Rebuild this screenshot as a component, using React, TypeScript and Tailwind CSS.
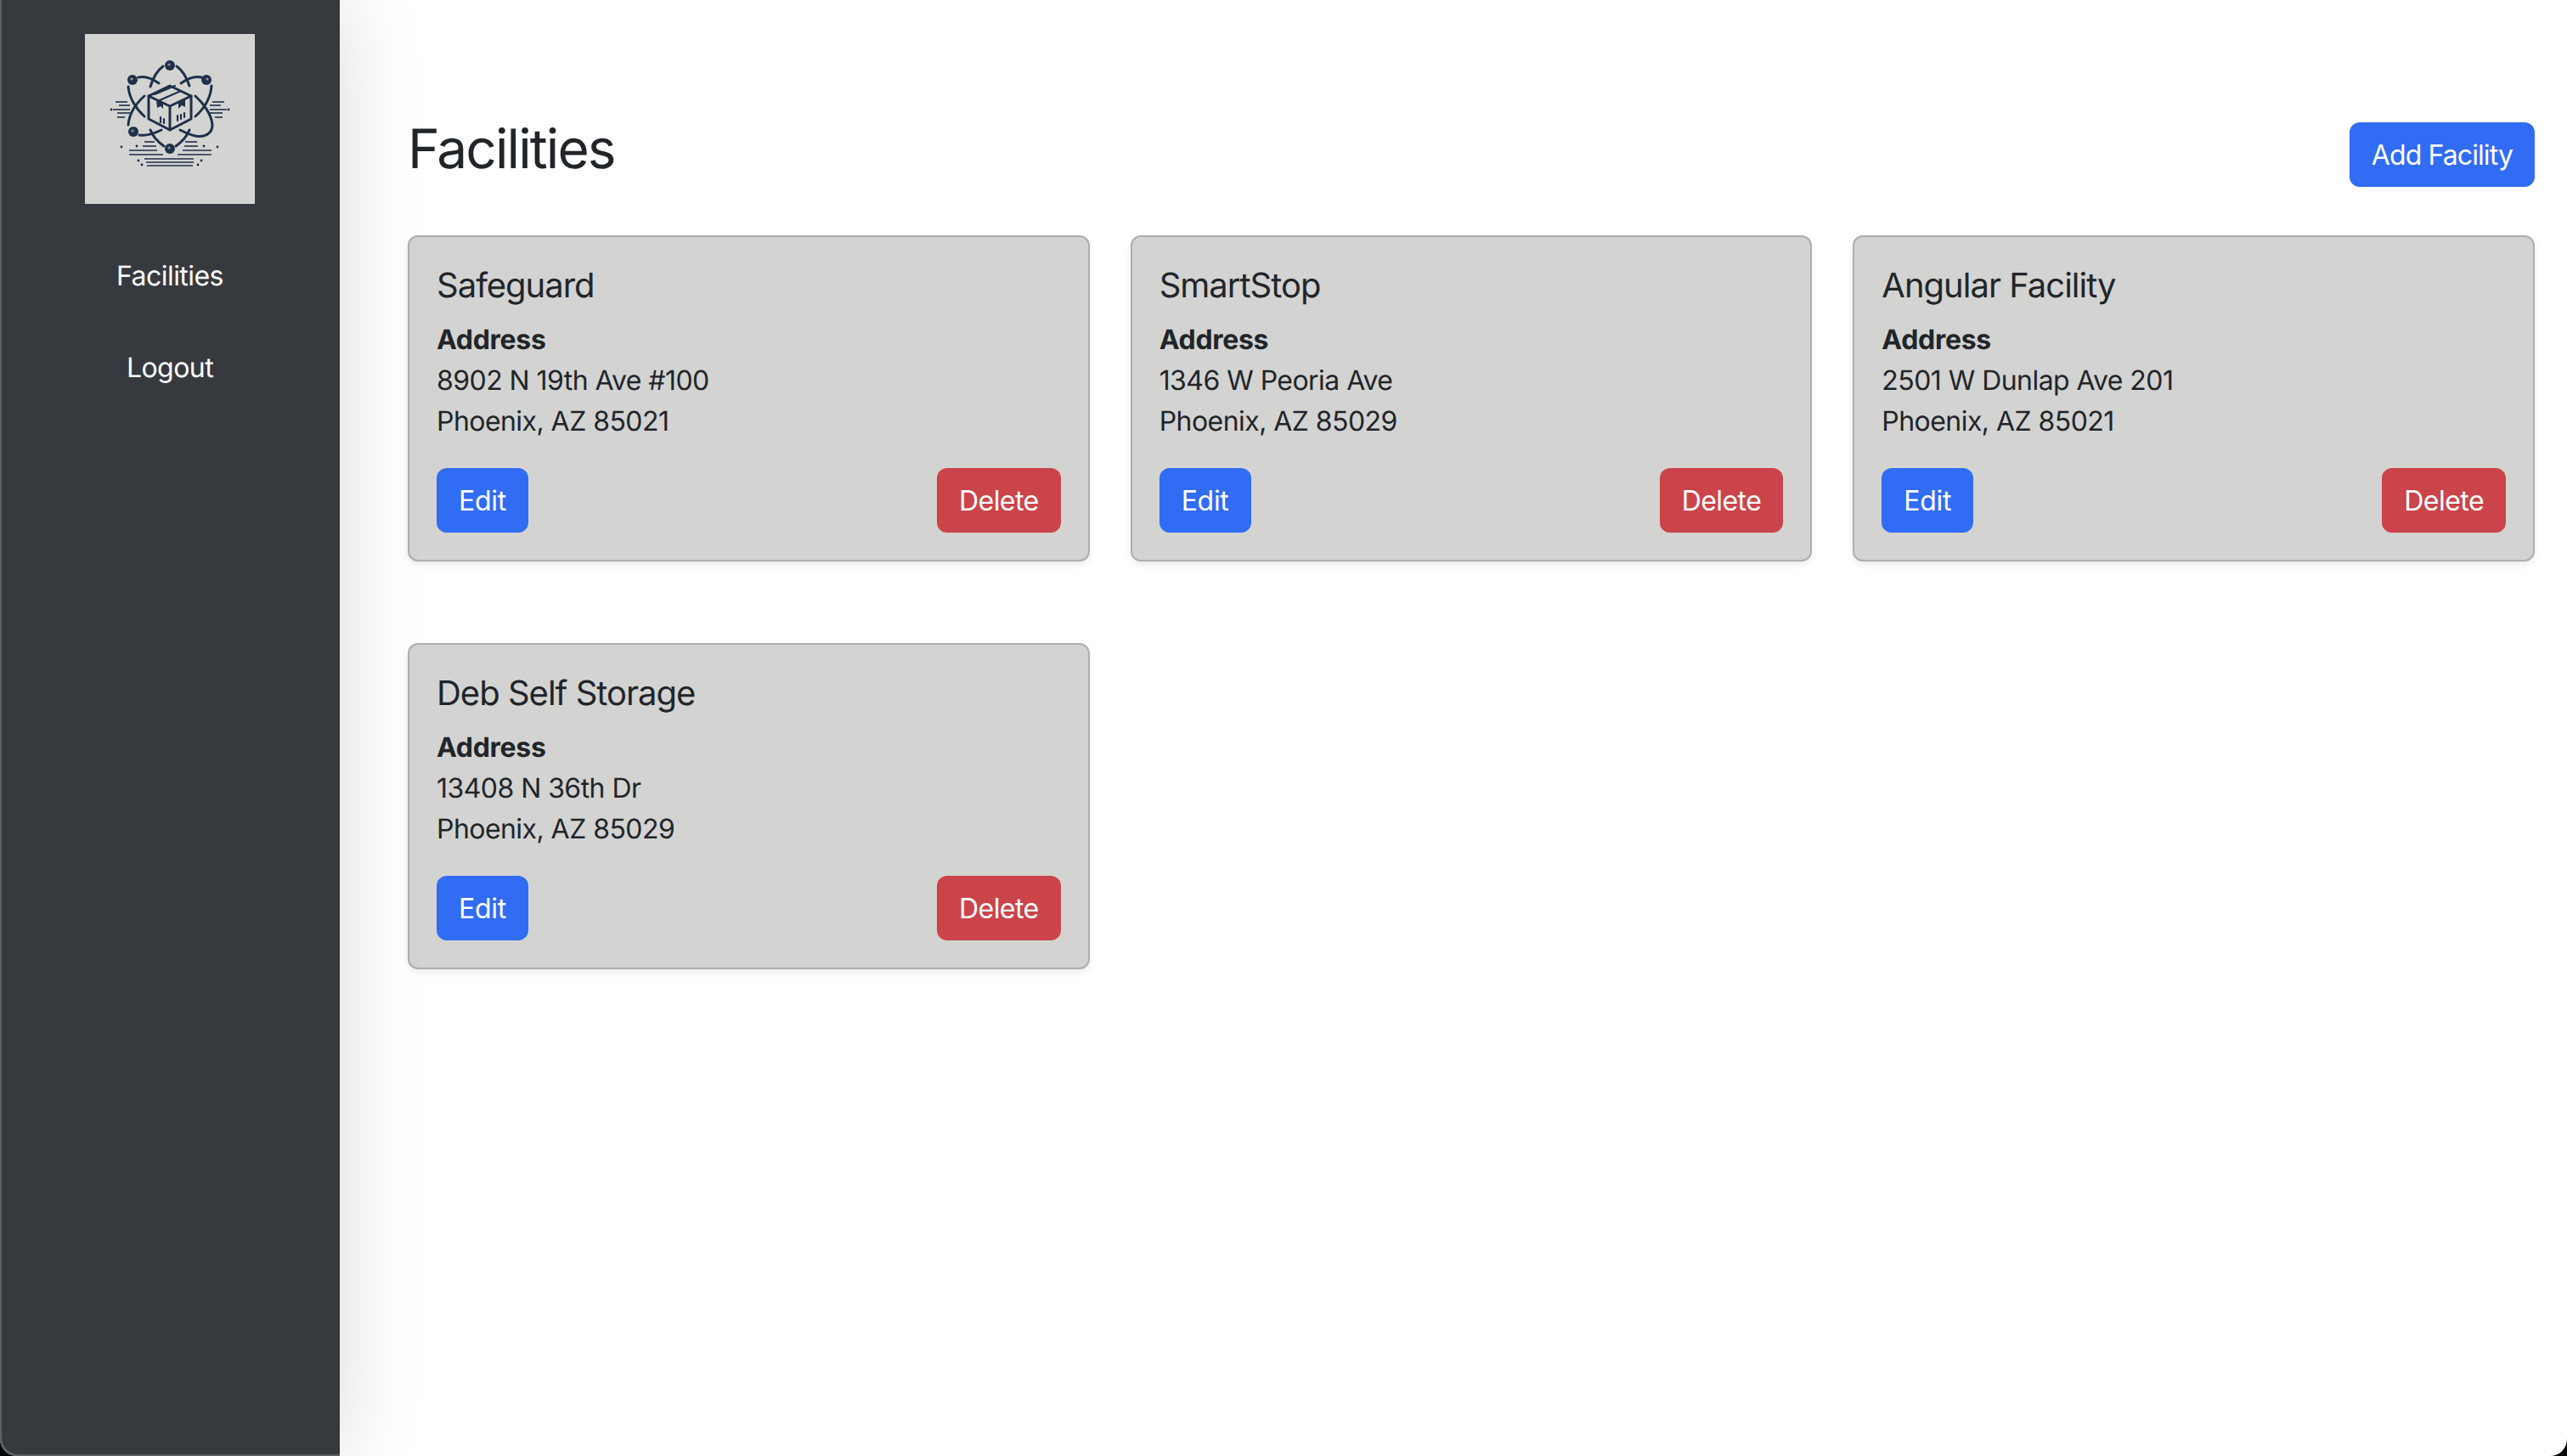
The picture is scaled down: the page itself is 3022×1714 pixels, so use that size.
import React from 'react';

const facilities = [
    { name: 'Safeguard', street: '8902 N 19th Ave #100', city: 'Phoenix, AZ 85021' },
    { name: 'SmartStop', street: '1346 W Peoria Ave', city: 'Phoenix, AZ 85029' },
    { name: 'Angular Facility', street: '2501 W Dunlap Ave 201', city: 'Phoenix, AZ 85021' },
    { name: 'Deb Self Storage', street: '13408 N 36th Dr', city: 'Phoenix, AZ 85029' },
];

const logoLines = [
    [36, 50, 80], [40, 53, 84], [33, 53, 89], [38, 53, 93], [38, 47, 98],
    [150, 164, 80], [147, 160, 84], [147, 167, 89], [147, 162, 93], [153, 162, 98],
    [70, 82, 127], [68, 84, 132], [52, 85, 137], [52, 92, 142],
    [118, 132, 127], [117, 133, 132], [115, 149, 137], [109, 149, 142],
    [70, 128, 147], [72, 128, 151], [73, 127, 155],
];

const logoDots = [
    [31, 89], [169, 89], [61, 132], [43, 133], [140, 132], [156, 133],
    [63, 149], [67, 154], [137, 149], [133, 154],
];

function Logo() {
    return (
        <svg width="200" height="200" viewBox="0 0 200 200" className="block bg-[#d3d4d2]">
            <g fill="none" stroke="#1f3048" strokeWidth="3" strokeLinecap="round" strokeLinejoin="round">
                {/* orbits */}
                <path d="M92 38 C85 43 80 52 77 62" />
                <path d="M108 38 C115 43 120 52 123 61" />
                <path d="M77 113 C80 121 86 127 93 132" />
                <path d="M123 113 C120 121 114 127 107 132" />
                <path d="M63 51 C72 49 80 53 87 58" />
                <path d="M137 51 C128 49 120 53 113 58" />
                <path d="M51 62 C52 75 60 88 70 97" />
                <path d="M149 61 C148 75 140 88 130 97" />
                <path d="M70 73 C60 82 52 94 51 107" />
                <path d="M130 73 C140 82 149 95 150 107 C150 118 140 122 130 120 C124 119 118 116 112 113" />
                <path d="M64 119 C73 120 82 117 90 113" />
                {/* box */}
                <path d="M100 61 L125 73 L125 100 L100 113 L75 100 L75 73 Z" />
                <path d="M75 73 L100 85 L125 73 M100 85 L100 113" />
                <path d="M82 71 L106 61 M88 78 L113 67" strokeWidth="2" />
                <path d="M89 98 V104 M93 100 V105 M109 102 V96 M113 100 V95 M117 98 V93" strokeWidth="2.2" />
            </g>
            <path d="M84 77 L92 81 L92 88 L89 85 L85 87 Z M110 81 L118 77 L118 86 L114 84 L110 88 Z" fill="#1f3048" />
            <g fill="#1f3048">
                <circle cx="100" cy="37" r="6" />
                <circle cx="56" cy="54" r="6" />
                <circle cx="143" cy="54" r="6" />
                <circle cx="57" cy="115" r="6" />
                <circle cx="100" cy="135" r="6" />
            </g>
            <g fill="#8d95a0">
                <circle cx="99" cy="36" r="1.6" />
                <circle cx="55" cy="53" r="1.6" />
                <circle cx="144" cy="53" r="1.6" />
                <circle cx="56" cy="114" r="1.6" />
                <circle cx="99" cy="134" r="1.6" />
            </g>
            <g stroke="#1f3048" strokeWidth="1.6">
                {logoLines.map(([x1, x2, y]) => (
                    <line key={`${x1}-${y}`} x1={x1} x2={x2} y1={y} y2={y} />
                ))}
            </g>
            <g fill="#1f3048">
                {logoDots.map(([cx, cy]) => (
                    <circle key={`${cx}-${cy}`} cx={cx} cy={cy} r="1.4" />
                ))}
            </g>
        </svg>
    );
}

function FacilityCard({ name, street, city }: { name: string; street: string; city: string }) {
    return (
        <div className="rounded-xl border-2 border-[#aeaeae] bg-[#d3d3d2] px-8 pt-[33px] pb-8 shadow-[0_4px_8px_rgba(0,0,0,0.075)]">
            <h5 className="mb-4 text-[40px] leading-[48px] font-normal tracking-[-1px]">{name}</h5>
            <div className="font-bold tracking-[-0.3px]">Address</div>
            <div>{street}</div>
            <div>{city}</div>
            <div className="mt-[31px] flex justify-between">
                <button className="rounded-xl bg-[#316cf4] px-[26px] pt-[15px] pb-[13px] tracking-[-0.3px] text-white">Edit</button>
                <button className="rounded-xl bg-[#cb444a] px-[26px] pt-[15px] pb-[13px] text-white">Delete</button>
            </div>
        </div>
    );
}

export default function App() {
    return (
        <div className="h-[1714px] w-[3022px] overflow-hidden bg-black font-['Inter',sans-serif] text-[32px] leading-[48px] tracking-[-0.55px] text-[#212529] [text-rendering:geometricPrecision]">
            <div className="flex h-full overflow-hidden rounded-b-[20px] bg-white">
                <aside className="z-10 flex w-[400px] flex-col items-center rounded-bl-[20px] bg-[#363a3f] pt-10 shadow-[inset_2px_-2px_0_#5c6065,0_0_100px_rgba(0,0,0,0.15)]">
                    <Logo />
                    <nav className="mt-[31px] flex flex-col items-center text-white">
                        <a className="py-[30px]">Facilities</a>
                        <a className="py-[30px]">Logout</a>
                    </nav>
                </aside>
                <main className="flex-1 pt-[144px] pr-[38px] pl-[80px]">
                    <div className="mb-[57px] flex items-start justify-between">
                        <h1 className="text-[64px] leading-[64px] font-normal tracking-[-1.9px]">Facilities</h1>
                        <button className="rounded-xl bg-[#316cf4] px-[26px] pt-[15px] pb-[13px] tracking-[-0.9px] text-white">Add Facility</button>
                    </div>
                    <div className="grid grid-cols-3 gap-x-12 gap-y-24">
                        {facilities.map((f) => (
                            <FacilityCard key={f.name} {...f} />
                        ))}
                    </div>
                </main>
            </div>
        </div>
    );
}
